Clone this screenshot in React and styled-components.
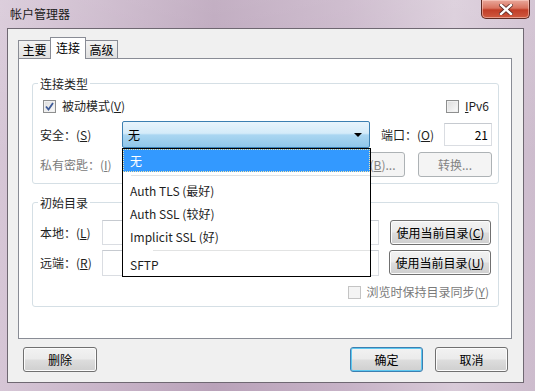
import React from 'react'
import styled, { createGlobalStyle } from 'styled-components'

const GlobalStyle = createGlobalStyle`
  html, body { margin: 0; padding: 0; }
  body {
    font-family: "Noto Sans CJK SC", "Noto Sans", sans-serif;
    font-size: 12px;
    color: #000;
    background: #fff;
  }
  u { text-underline-offset: 1px; }
`

function App() {
  return (
    <>
      <GlobalStyle />
      <Window>
        <TitleBar>
          <Title>帐户管理器</Title>
          <CloseButton>
            <svg width="14" height="11" viewBox="0 0 14 11">
              <path d="M2 1 L12 10 M12 1 L2 10" stroke="#5a2a24" strokeWidth="4" strokeLinecap="square" />
              <path d="M2 1 L12 10 M12 1 L2 10" stroke="#fff" strokeWidth="2.4" strokeLinecap="square" />
            </svg>
          </CloseButton>
        </TitleBar>
        <Client>
          <TabStrip>
            <Tab>主要</Tab>
            <Tab active>连接</Tab>
            <Tab>高级</Tab>
          </TabStrip>
          <Panel>
            <Group first>
              <Caption>连接类型</Caption>
              <Row top={6} h={16}>
                <CheckWrap>
                  <CheckBox checked>
                    <svg width="9" height="9" viewBox="0 0 9 9">
                      <path d="M1 4.5 L3.5 7.5 L8 1" stroke="#3d5a98" strokeWidth="1.8" fill="none" />
                    </svg>
                  </CheckBox>
                  <span>被动模式(<u>V</u>)</span>
                </CheckWrap>
                <CheckWrap right>
                  <CheckBox />
                  <span><u>I</u>Pv6</span>
                </CheckWrap>
              </Row>
              <Row top={7} h={27}>
                <Label w={82}>安全：(<u>S</u>)</Label>
                <ComboWrap>
                  <Combo>
                    <span>无</span>
                    <Arrow />
                  </Combo>
                  <DropList>
                    <Item selected>无</Item>
                    <Separator top={3} bottom={3} indent={8} />
                    <Item>Auth TLS (最好)</Item>
                    <Item>Auth SSL (较好)</Item>
                    <Item>Implicit SSL (好)</Item>
                    <Separator top={2} bottom={2} indent={30} />
                    <Item>SFTP</Item>
                  </DropList>
                </ComboWrap>
                <Label gap={11}>端口：(<u>O</u>)</Label>
                <Input w={48} h={23} align="right">21</Input>
              </Row>
              <Row top={4} h={25}>
                <Label disabled>私有密匙：(<u>I</u>)</Label>
                <Button disabled w={69} style={{ marginLeft: 'auto' }}>浏览(<u>B</u>)...</Button>
                <Button disabled w={74} gap={13}>转换...</Button>
              </Row>
            </Group>
            <Group>
              <Caption>初始目录</Caption>
              <Row top={9} h={25}>
                <Label w={62}>本地：(<u>L</u>)</Label>
                <Input w={277} h={25} />
                <Button w={101} gap={11}>使用当前目录(<u>C</u>)</Button>
              </Row>
              <Row top={5} h={25}>
                <Label w={62}>远端：(<u>R</u>)</Label>
                <Input w={277} h={26} />
                <Button w={102} gap={10}>使用当前目录(<u>U</u>)</Button>
              </Row>
              <Row top={9} h={16}>
                <CheckWrap right disabled>
                  <CheckBox disabled />
                  <span>浏览时保持目录同步(<u>Y</u>)</span>
                </CheckWrap>
              </Row>
            </Group>
          </Panel>
          <Footer>
            <Button w={74}>删除</Button>
            <Button w={73} primary style={{ marginLeft: 'auto' }}>确定</Button>
            <Button w={73} gap={12}>取消</Button>
          </Footer>
        </Client>
      </Window>
    </>
  )
}

export default App

const Window = styled.div`
  width: 535px;
  height: 391px;
  box-sizing: border-box;
  padding: 0 11px 8px 7px;
  display: flex;
  flex-direction: column;
  background:
    linear-gradient(180deg, rgba(255,255,255,0.15), rgba(255,255,255,0) 40%),
    linear-gradient(90deg, #d6c6d6 0%, #c8b4c8 20%, #b9a2b9 40%, #c7b3c7 65%, #d8cad8 85%, #cdbccd 100%);
`

const TitleBar = styled.div`
  height: 28px;
  display: flex;
  align-items: flex-start;
  flex-shrink: 0;
`

const Title = styled.div`
  padding-left: 3px;
  line-height: 28px;
  font-size: 12px;
  color: #1a1a1a;
`

const CloseButton = styled.div`
  margin-left: auto;
  margin-right: -6px;
  width: 49px;
  height: 19px;
  box-sizing: border-box;
  border: 1px solid #5e2a22;
  border-top: none;
  border-radius: 0 0 5px 5px;
  background: linear-gradient(180deg, #e9a89b 0%, #d9735f 45%, #c13d27 55%, #cf5a40 100%);
  box-shadow: inset 0 0 0 1px rgba(255, 220, 210, 0.5);
  display: flex;
  align-items: center;
  justify-content: center;
`

const Client = styled.div`
  flex: 1;
  box-sizing: border-box;
  border: 1px solid #6f6872;
  background: #f0f0f0;
  padding: 8px 11px 0 10px;
  display: flex;
  flex-direction: column;
`

const TabStrip = styled.div`
  height: 22px;
  display: flex;
  align-items: flex-end;
  margin-bottom: -1px;
  position: relative;
  z-index: 1;
`

const Tab = styled.div`
  box-sizing: border-box;
  width: ${p => (p.active ? 36 : 33)}px;
  height: ${p => (p.active ? 22 : 18)}px;
  margin-bottom: ${p => (p.active ? 0 : 1)}px;
  margin-left: -1px;
  &:first-child { margin-left: 0; }
  border: 1px solid #898c95;
  border-bottom: none;
  background: ${p => (p.active ? '#fff' : 'linear-gradient(180deg, #f3f3f3, #e0e0e0)')};
  display: flex;
  align-items: center;
  justify-content: center;
  font-size: 12px;
  line-height: 16px;
  padding-bottom: ${p => (p.active ? 2 : 0)}px;
  position: relative;
  z-index: ${p => (p.active ? 2 : 1)};
`

const Panel = styled.div`
  height: 281px;
  box-sizing: border-box;
  border: 1px solid #898c95;
  background: #fff;
  padding: 0 12px 0 13px;
  display: flex;
  flex-direction: column;
`

const Group = styled.div`
  margin-top: ${p => (p.first ? 24 : 18)}px;
  border: 1px solid #d5dfe5;
  border-radius: 3px;
  box-shadow: inset 0 0 0 1px #fff;
  padding: 0 6px 6px 7px;
  display: flex;
  flex-direction: column;
`

const Caption = styled.div`
  align-self: flex-start;
  margin: -9px 0 0 -2px;
  padding: 0 2px;
  height: 17px;
  line-height: 17px;
  background: #fff;
  color: #1e1e1e;
`

const Row = styled.div`
  margin-top: ${p => p.top}px;
  height: ${p => p.h}px;
  display: flex;
  align-items: center;
`

const Label = styled.div`
  width: ${p => (p.w ? `${p.w}px` : 'auto')};
  margin-left: ${p => p.gap || 0}px;
  flex-shrink: 0;
  white-space: nowrap;
  color: ${p => (p.disabled ? '#7a7a7a' : '#1e1e1e')};
  line-height: 16px;
`

const CheckWrap = styled.label`
  display: flex;
  align-items: center;
  gap: 6px;
  padding-left: ${p => (p.right ? 0 : 3)}px;
  padding-right: ${p => (p.right ? 3 : 0)}px;
  margin-left: ${p => (p.right ? 'auto' : 0)};
  color: ${p => (p.disabled ? '#7a7a7a' : '#1e1e1e')};
  line-height: 16px;
`

const CheckBox = styled.span`
  width: 13px;
  height: 13px;
  box-sizing: border-box;
  border: 1px solid ${p => (p.disabled ? '#c4c4c4' : '#8e8f8f')};
  background: ${p => (p.disabled ? '#f4f4f4' : 'linear-gradient(135deg, #dcdcdc, #fbfbfb)')};
  box-shadow: inset 0 0 0 1px ${p => (p.disabled ? '#f4f4f4' : '#f0f0f0')};
  display: flex;
  align-items: center;
  justify-content: center;
`

const ComboWrap = styled.div`
  position: relative;
  width: 248px;
  height: 27px;
  flex-shrink: 0;
`

const Combo = styled.div`
  height: 100%;
  box-sizing: border-box;
  border: 1px solid #3c7fb1;
  border-radius: 2px;
  background: linear-gradient(180deg, #e8f4fc 0%, #d4ebf9 45%, #aad6f1 52%, #8fc6ea 100%);
  padding: 0 7px 0 5px;
  display: flex;
  align-items: center;
  justify-content: space-between;
  line-height: 16px;
`

const Arrow = styled.span`
  width: 0;
  height: 0;
  border-left: 4px solid transparent;
  border-right: 4px solid transparent;
  border-top: 4px solid #000;
`

const DropList = styled.div`
  position: absolute;
  top: 100%;
  left: 0;
  width: 249px;
  box-sizing: border-box;
  border: 1px solid #000;
  background: #fff;
  z-index: 5;
  display: flex;
  flex-direction: column;
`

const Item = styled.div`
  height: 23px;
  box-sizing: border-box;
  padding-left: 6px;
  display: flex;
  align-items: center;
  color: ${p => (p.selected ? '#fff' : '#1e1e1e')};
  background: ${p => (p.selected ? '#3399ff' : 'transparent')};
  border: 1px dotted ${p => (p.selected ? '#f5e6a8' : 'transparent')};
  line-height: 16px;
`

const Separator = styled.div`
  margin: ${p => p.top}px 0 ${p => p.bottom}px ${p => p.indent}px;
  height: 1px;
  background: #e2e3e3;
`

const Input = styled.div`
  width: ${p => p.w}px;
  height: ${p => p.h}px;
  margin-left: ${p => (p.align === 'right' ? 'auto' : 0)};
  box-sizing: border-box;
  border: 1px solid #dadde2;
  border-top-color: #c6cad0;
  background: #fff;
  padding: 0 3px;
  display: flex;
  align-items: center;
  justify-content: ${p => (p.align === 'right' ? 'flex-end' : 'flex-start')};
  flex-shrink: 0;
  line-height: 16px;
`

const Button = styled.div`
  width: ${p => p.w}px;
  height: 25px;
  margin-left: ${p => p.gap || 0}px;
  flex-shrink: 0;
  box-sizing: border-box;
  border: 1px solid ${p => (p.disabled ? '#adb2b5' : p.primary ? '#3c7fb1' : '#707070')};
  border-radius: 3px;
  background: ${p =>
    p.disabled
      ? '#f4f4f4'
      : 'linear-gradient(180deg, #f2f2f2 0%, #ebebeb 48%, #dddddd 52%, #cfcfcf 100%)'};
  box-shadow: inset 0 0 0 1px ${p => (p.disabled ? '#f4f4f4' : p.primary ? '#5ec8f0' : '#fcfcfc')};
  color: ${p => (p.disabled ? '#838383' : '#000')};
  display: flex;
  align-items: center;
  justify-content: center;
  white-space: nowrap;
  line-height: 16px;
`

const Footer = styled.div`
  margin-top: 8px;
  padding: 0 4px 0 5px;
  display: flex;
  align-items: center;
`
